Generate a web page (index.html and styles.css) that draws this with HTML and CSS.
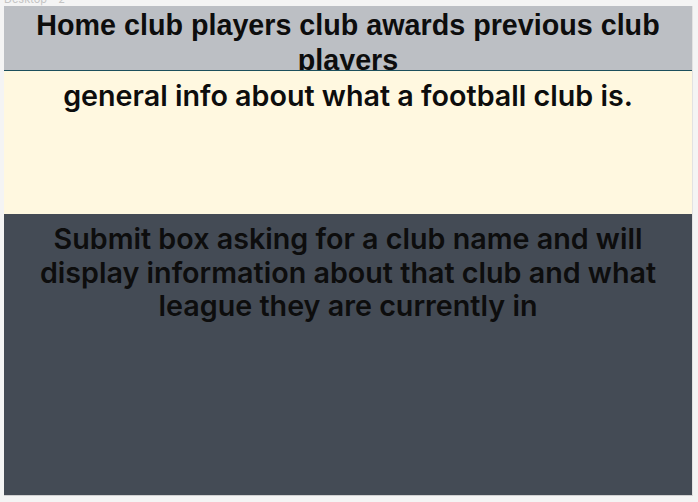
FILE: index.html
```html
<!DOCTYPE html>
<html>
<head>
<meta charset="utf-8">
<link rel="stylesheet" href="styles.css">
</head>
<body>
<div class="label"><span>Desktop - 2</span></div>
<div class="frame">
  <header class="nav">Home club players club awards previous club players</header>
  <section class="info">general info about what a football club is.</section>
  <section class="submit">Submit box asking for a club name and will display information about that club and what league they are currently in</section>
</div>
</body>
</html>
```
FILE: styles.css
```css
html, body {
  margin: 0;
  padding: 0;
  background: #f4f4f4;
}
.label {
  height: 6px;
  overflow: hidden;
  padding-left: 4px;
  font-family: "Inter", sans-serif;
  font-size: 11px;
  color: #c4c4c4;
}
.label span {
  display: block;
  margin-top: -8px;
  line-height: 14px;
}
.frame {
  margin-left: 4px;
  width: 688px;
  height: 489px;
  display: flex;
  flex-direction: column;
  border-right: 1px solid #e2e2e2;
  border-bottom: 1px solid #d0d0d0;
}
.nav {
  height: 65px;
  flex: none;
  box-sizing: border-box;
  padding: 2px 20px 0;
  overflow: hidden;
  background: #bcbfc4;
  border-bottom: 1px solid #1d4f5c;
  font-family: "Liberation Sans", Arial, sans-serif;
  font-weight: 700;
  font-size: 28.7px;
  line-height: 35px;
  text-align: center;
  color: #0d0d0d;
}
.info {
  height: 143px;
  flex: none;
  box-sizing: border-box;
  padding-top: 8px;
  background: #fff8e0;
  font-family: "Inter", sans-serif;
  font-weight: 600;
  font-size: 28.7px;
  line-height: 34px;
  text-align: center;
  color: #0d0d0d;
}
.submit {
  flex: 1;
  box-sizing: border-box;
  padding: 8px 20px 0;
  background: #444b55;
  font-family: "Inter", sans-serif;
  font-weight: 600;
  font-size: 28.7px;
  line-height: 33.5px;
  text-align: center;
  color: #0d0d0d;
}
```
